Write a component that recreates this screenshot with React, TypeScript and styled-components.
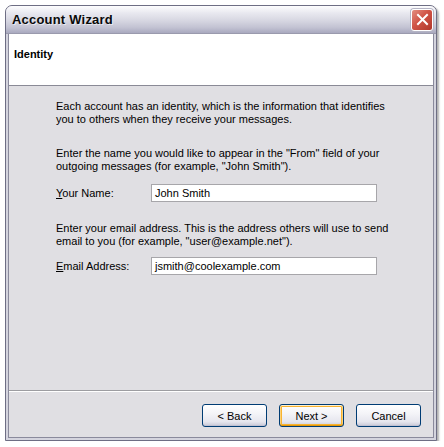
import React from "react";
import styled, { createGlobalStyle } from "styled-components";

const Global = createGlobalStyle`
  html, body { margin: 0; padding: 0; background: #ffffff; }
  body { font-family: Tahoma, "Liberation Sans", Arial, sans-serif; }
`;

const Page = styled.div`
  padding: 5px 0 0 5px;
`;

const Window = styled.div`
  width: 432px;
  height: 436px;
  box-sizing: border-box;
  display: flex;
  flex-direction: column;
  border: 1px solid #6e6e84;
  border-radius: 7px 7px 0 0;
  background: #c9c9d6;
  box-shadow: 2px 2px 2px rgba(0, 0, 0, 0.3);
  overflow: hidden;
`;

const TitleBar = styled.div`
  height: 27px;
  flex: none;
  display: flex;
  align-items: center;
  justify-content: space-between;
  padding: 0 3px 0 6px;
  background: linear-gradient(
    to bottom,
    #fdfdfe 0%,
    #e9e9f0 25%,
    #d6d6e1 55%,
    #c2c2d2 80%,
    #a9a9bf 100%
  );
  border-bottom: 1px solid #9a9aad;
`;

const Title = styled.span`
  font-family: "Liberation Sans", Arial, sans-serif;
  font-weight: bold;
  font-size: 13px;
  color: #0a0a0a;
  text-shadow: 1px 1px 0 rgba(255, 255, 255, 0.6);
  letter-spacing: 0.2px;
`;

const CloseButton = styled.div`
  width: 20px;
  height: 20px;
  border: 1px solid #ffffff;
  border-radius: 3px;
  background: linear-gradient(135deg, #e48f82 0%, #d05446 45%, #b0372b 100%);
  box-shadow: 0 0 0 1px #b4b4c4;
  display: flex;
  align-items: center;
  justify-content: center;
`;

const Frame = styled.div`
  flex: 1;
  display: flex;
  flex-direction: column;
  border-left: 2px solid #d4d4de;
  border-right: 2px solid #d4d4de;
  border-bottom: 2px solid #d4d4de;
  box-shadow: inset 0 0 0 1px #8a8a9c;
  padding: 0 1px 1px 1px;
  background: #e0dfe3;
`;

const Header = styled.div`
  height: 52px;
  flex: none;
  background: #ffffff;
  border-bottom: 1px solid #8a8a96;
  padding: 14px 0 0 5px;
  box-sizing: border-box;
  font-family: "Liberation Sans", Arial, sans-serif;
  font-weight: bold;
  font-size: 11px;
  color: #000;
`;

const Body = styled.div`
  flex: 1;
  display: flex;
  flex-direction: column;
  padding: 14px 0 0 47px;
  font-family: "Liberation Sans", Arial, sans-serif;
  font-size: 11px;
  color: #000;
`;

const Para = styled.div<{ $gap?: number }>`
  line-height: 13px;
  margin-bottom: ${(p) => p.$gap ?? 0}px;
`;

const Line = styled.div`
  white-space: nowrap;
`;

const FieldRow = styled.div<{ $gap?: number }>`
  display: flex;
  align-items: center;
  height: 18px;
  margin-bottom: ${(p) => p.$gap ?? 0}px;
`;

const Label = styled.label`
  width: 95px;
  flex: none;
`;

const Input = styled.div`
  width: 226px;
  height: 18px;
  box-sizing: border-box;
  background: #ffffff;
  border: 1px solid #a7a6aa;
  padding: 0 0 0 3px;
  line-height: 16px;
`;

const Separator = styled.div`
  height: 0;
  border-top: 1px solid #9d9da1;
  border-bottom: 1px solid #ffffff;
  flex: none;
`;

const Footer = styled.div`
  height: 45px;
  flex: none;
  display: flex;
  justify-content: flex-end;
  align-items: flex-start;
  gap: 12px;
  padding: 12px 12px 0 0;
  box-sizing: border-box;
`;

const Button = styled.div<{ $default?: boolean }>`
  width: 65px;
  height: 23px;
  box-sizing: border-box;
  border: 1px solid #003c74;
  border-radius: 3px;
  background: linear-gradient(to bottom, #ffffff 0%, #f4f4f8 40%, #e6e6ee 80%, #c7c7d6 100%);
  font-family: "Liberation Sans", Arial, sans-serif;
  font-size: 11px;
  color: #000;
  display: flex;
  align-items: center;
  justify-content: center;
  box-shadow: ${(p) =>
    p.$default
      ? "inset 0 1px 0 #fff0cf, inset 0 -1px 0 #e5970b, inset 1px 0 0 #fbd27a, inset -1px 0 0 #fbd27a, inset 0 0 0 2px #f8b330"
      : "inset 0 -1px 0 #c1c1d2"};
`;

const U = styled.span`
  text-decoration: underline;
`;

const Identity = styled.div`
  flex: 1;
`;

export default function App() {
  return (
    <>
      <Global />
      <Page>
        <Window>
          <TitleBar>
            <Title>Account Wizard</Title>
            <CloseButton>
              <svg width="13" height="13" viewBox="0 0 13 13">
                <path
                  d="M2 2 L11 11 M11 2 L2 11"
                  stroke="#ffffff"
                  strokeWidth="2"
                  strokeLinecap="square"
                />
              </svg>
            </CloseButton>
          </TitleBar>
          <Frame>
            <Header>Identity</Header>
            <Body>
              <Identity>
                <Para $gap={21}>
                  <Line>Each account has an identity, which is the information that identifies</Line>
                  <Line>you to others when they receive your messages.</Line>
                </Para>
                <Para $gap={11}>
                  <Line>Enter the name you would like to appear in the "From" field of your</Line>
                  <Line>outgoing messages (for example, "John Smith").</Line>
                </Para>
                <FieldRow $gap={20}>
                  <Label>
                    <U>Y</U>our Name:
                  </Label>
                  <Input>John Smith</Input>
                </FieldRow>
                <Para $gap={9}>
                  <Line>Enter your email address. This is the address others will use to send</Line>
                  <Line>email to you (for example, "user@example.net").</Line>
                </Para>
                <FieldRow>
                  <Label>
                    <U>E</U>mail Address:
                  </Label>
                  <Input>jsmith@coolexample.com</Input>
                </FieldRow>
              </Identity>
            </Body>
            <Separator />
            <Footer>
              <Button>&lt; Back</Button>
              <Button $default>Next &gt;</Button>
              <Button>Cancel</Button>
            </Footer>
          </Frame>
        </Window>
      </Page>
    </>
  );
}
